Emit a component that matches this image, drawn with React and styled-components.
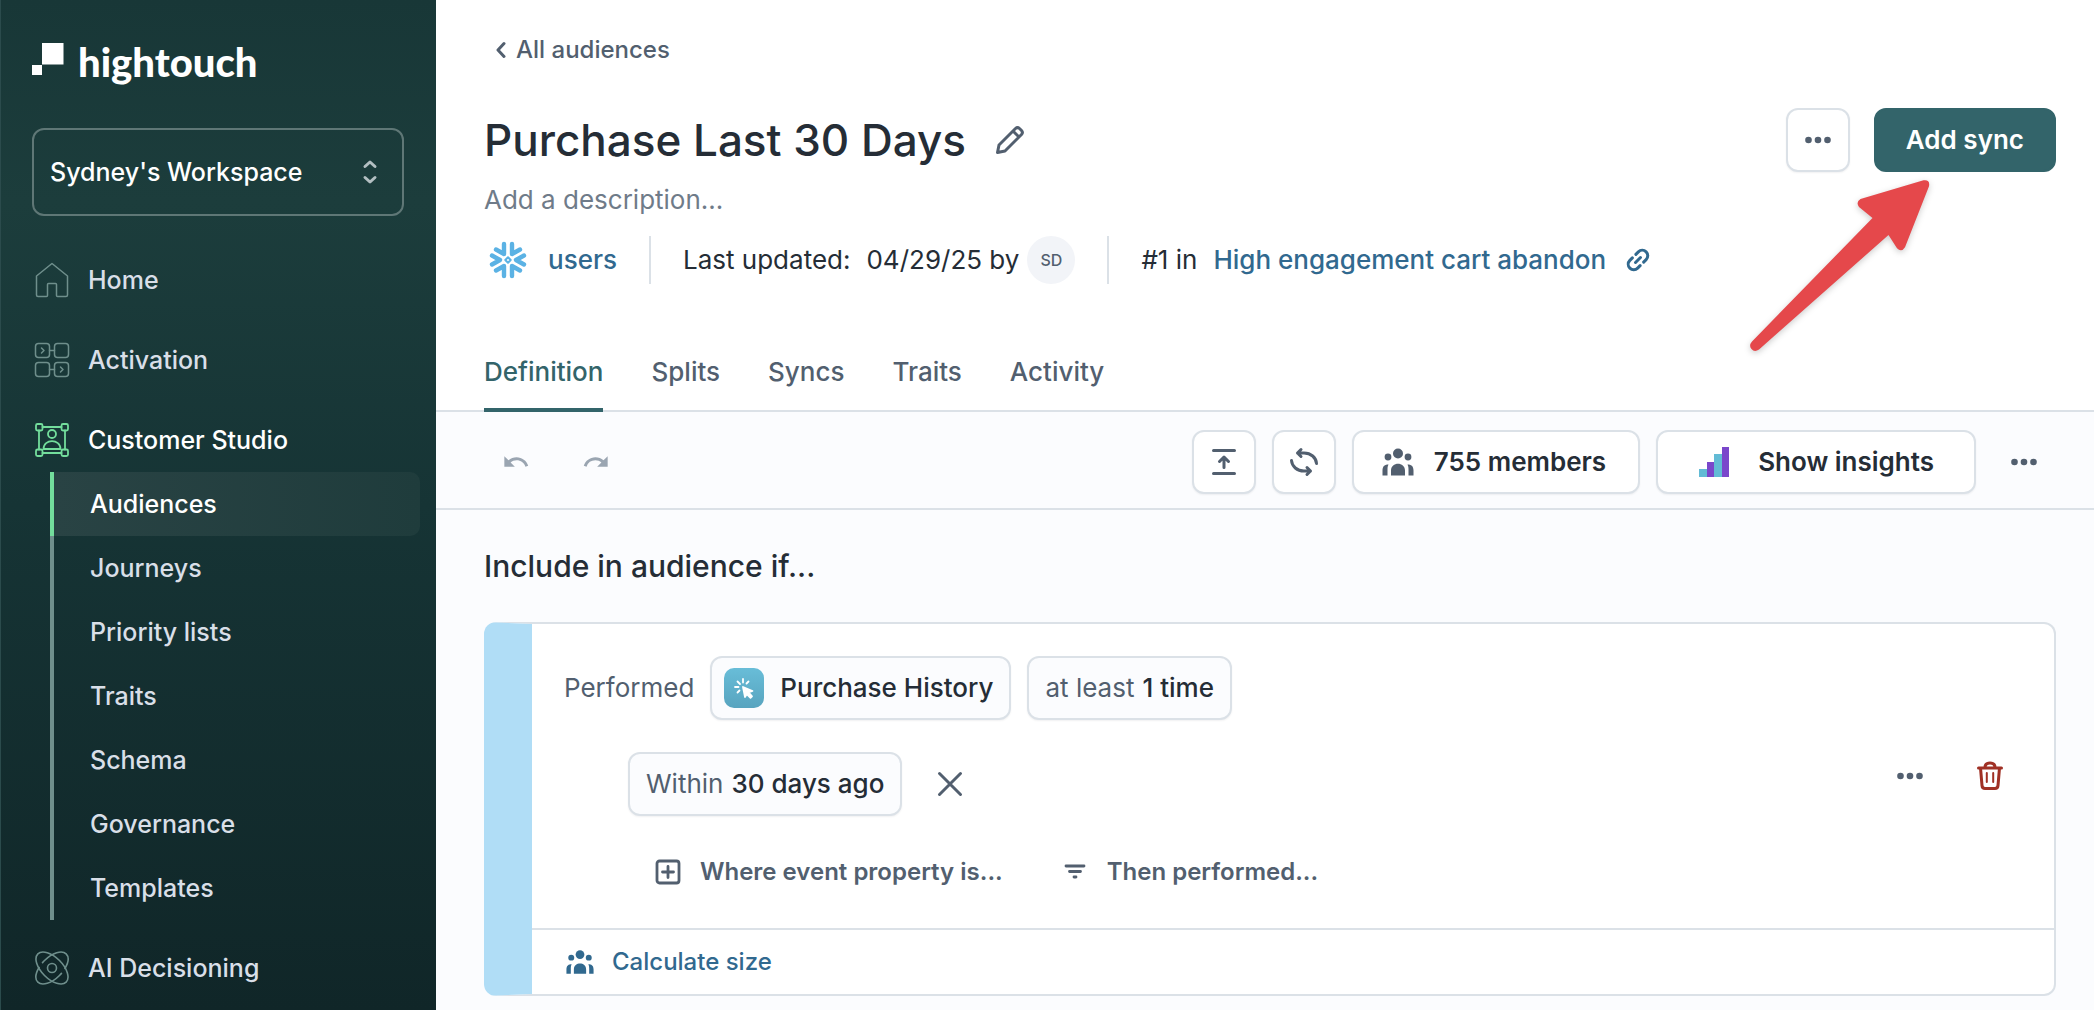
import React from "react";
import styled, { createGlobalStyle } from "styled-components";
import { MdUndo, MdRedo } from "react-icons/md";

const SLATE = "#525f6f";
const INK = "#252d36";
const GRAY = "#6f7b89";
const LINE = "#dbe1e7";
const TEAL = "#33646a";
const BLUE = "#31698f";
const SURFACE = "#fbfcfe";
const GREEN = "#73dd9c";
const MUTED = "#6f8f8c";

const GlobalStyle = createGlobalStyle`
  * {
    box-sizing: border-box;
  }

  body {
    margin: 0;
    background: ${SURFACE};
    color: ${INK};
    font-family: Inter, "Liberation Sans", sans-serif;
    font-size: 26px;
    line-height: 32px;
  }

  button {
    font: inherit;
    color: inherit;
    padding: 0;
    border: none;
    background: none;
    cursor: pointer;
  }

  a {
    text-decoration: none;
  }

  svg {
    display: block;
    flex: none;
  }
`;

const Page = styled.div`
  display: flex;
  height: 100vh;
  overflow: hidden;
`;

const Sidebar = styled.aside`
  flex: none;
  display: flex;
  flex-direction: column;
  gap: 32px;
  width: 436px;
  padding: 40px 0 0;
  border-left: 1px solid #2b4b4c;
  background: linear-gradient(#183737, #1c3d3c 20%, #163435 50%, #102628);
  font-size: 25px;
  font-weight: 500;

  > * {
    flex-shrink: 0;
  }
`;

const Logo = styled.a`
  display: flex;
  gap: 14px;
  height: 56px;
  padding-left: 31px;
  color: #fff;
  font-family: Lato, sans-serif;
  font-weight: 900;
  font-size: 40px;
  line-height: 44px;

  svg {
    margin-top: 3px;
  }
`;

const Workspace = styled.button`
  display: flex;
  align-items: center;
  justify-content: space-between;
  height: 88px;
  margin: 0 32px 0 31px;
  padding: 0 18px 0 16px;
  border: 2px solid #5f7776;
  border-radius: 12px;
  color: #fff;

  svg {
    color: #b3bfc2;
  }
`;

const Nav = styled.nav`
  display: flex;
  flex-direction: column;
`;

const NavLink = styled.a`
  display: flex;
  align-items: center;
  gap: 18px;
  height: 64px;
  margin-bottom: ${({ $active }) => ($active ? 0 : 16)}px;
  padding-left: 33px;
  color: ${({ $active }) => ($active ? "#fff" : "#d9dfe8")};

  svg {
    color: ${({ $active }) => ($active ? GREEN : MUTED)};
  }
`;

const SubNav = styled.div`
  display: flex;
  flex-direction: column;
  margin: 0 16px 16px 49px;
`;

const SubLink = styled.a`
  display: flex;
  align-items: center;
  height: 64px;
  padding-left: 36px;
  border-left: 4px solid ${({ $active }) => ($active ? GREEN : MUTED)};
  border-radius: ${({ $active }) => ($active ? "0 10px 10px 0" : "0")};
  background: ${({ $active }) =>
    $active ? "linear-gradient(90deg, #294344, #1f3c3c)" : "none"};
  color: ${({ $active }) => ($active ? "#fff" : "#d9dfe8")};
`;

const Main = styled.main`
  position: relative;
  flex: 1;
  min-width: 0;
`;

const Header = styled.header`
  padding: 34px 38px 0 48px;
  border-bottom: 2px solid ${LINE};
  background: #fff;
`;

const BackLink = styled.a`
  display: inline-flex;
  align-items: center;
  gap: 10px;
  padding-left: 12px;
  color: ${SLATE};
  font-size: 24px;
  font-weight: 500;
`;

const TitleRow = styled.div`
  display: flex;
  align-items: center;
  gap: 24px;
  height: 64px;
  margin-top: 42px;
`;

const Title = styled.h1`
  margin: 0 4px 0 0;
  font-size: 44px;
  font-weight: 500;
  line-height: 56px;
`;

const Spacer = styled.div`
  flex: 1;
`;

const Button = styled.button`
  display: flex;
  align-items: center;
  justify-content: center;
  height: 64px;
  min-width: 64px;
  padding: ${({ $pad }) => $pad || "0"};
  gap: ${({ $gap }) => $gap || 0}px;
  border: 2px solid ${LINE};
  border-radius: 12px;
  background: #fff;
  color: ${INK};
  font-weight: 600;
  box-shadow: 0 1px 2px rgba(16, 24, 40, 0.06);

  svg {
    color: ${SLATE};
  }
`;

const PrimaryButton = styled(Button)`
  padding: 0 30px;
  border-color: ${TEAL};
  background: ${TEAL};
  color: #fff;
  box-shadow: none;
`;

const IconButton = styled.button`
  display: flex;
  align-items: center;
  justify-content: center;
  width: ${({ $size }) => $size || 32}px;
  height: 48px;
  color: ${({ $color }) => $color || SLATE};
`;

const Description = styled.p`
  margin: 12px 0 20px;
  color: ${GRAY};
`;

const Meta = styled.div`
  display: flex;
  align-items: center;
  height: 48px;
`;

const MetaGroup = styled.div`
  display: flex;
  align-items: center;
  gap: 16px;
  height: 48px;
  padding: 0 32px;
  border-left: 2px solid ${LINE};

  &:first-child {
    gap: 21px;
    padding-left: 5px;
    border-left: none;
  }
`;

const MetaLink = styled.a`
  color: ${BLUE};
  font-weight: 500;
`;

const Avatar = styled.span`
  width: 48px;
  height: 48px;
  margin-left: -8px;
  border-radius: 50%;
  background: #f2f4f8;
  color: ${SLATE};
  font-size: 16px;
  font-weight: 500;
  line-height: 48px;
  text-align: center;
`;

const Tabs = styled.div`
  display: flex;
  gap: 48px;
  margin: 56px 0 -2px;
`;

const Tab = styled.button`
  height: 72px;
  padding-bottom: 4px;
  border-bottom: 4px solid ${({ $active }) => ($active ? TEAL : "transparent")};
  color: ${({ $active }) => ($active ? TEAL : SLATE)};
  font-weight: 500;
`;

const Toolbar = styled.div`
  display: flex;
  align-items: center;
  gap: 16px;
  padding: 18px 38px 14px 48px;
  border-bottom: 2px solid ${LINE};
`;

const History = styled.div`
  display: flex;
  gap: 16px;

  button {
    color: #9aa5b1;
  }
`;

const Content = styled.section`
  padding: 36px 38px 0 48px;
`;

const Heading = styled.h2`
  margin: 0 0 36px;
  font-size: 30px;
  font-weight: 500;
  line-height: 40px;
`;

const Card = styled.div`
  border: 2px solid ${LINE};
  border-left: 48px solid #b0ddf6;
  border-radius: 12px;
  background: #fff;
`;

const CardBody = styled.div`
  display: flex;
  align-items: center;
  justify-content: space-between;
  padding: 32px 48px 32px 32px;
`;

const Conditions = styled.div`
  display: flex;
  flex-direction: column;
  gap: 32px;
`;

const ConditionRow = styled.div`
  display: flex;
  align-items: center;
  gap: ${({ $gap }) => $gap || 16}px;
  padding-left: ${({ $indent }) => $indent || 0}px;
  color: ${SLATE};
`;

const Pill = styled.button`
  display: flex;
  align-items: center;
  gap: ${({ $gap }) => $gap || 8}px;
  height: 64px;
  padding: 0 16px;
  padding-left: ${({ $gap }) => ($gap ? 12 : 16)}px;
  border: 2px solid ${LINE};
  border-radius: 12px;
  background: ${SURFACE};
  color: ${SLATE};
  box-shadow: 0 1px 2px rgba(16, 24, 40, 0.06);

  strong {
    color: ${INK};
    font-weight: 500;
  }
`;

const EventBadge = styled.span`
  display: flex;
  align-items: center;
  justify-content: center;
  width: 40px;
  height: 40px;
  border-radius: 10px;
  background: linear-gradient(#68bdd8, #58a4bf);
  color: #fff;
`;

const TextButton = styled.button`
  display: flex;
  align-items: center;
  gap: 18px;
  height: 48px;
  color: ${({ $color }) => $color || SLATE};
  font-size: 24px;
  font-weight: ${({ $weight }) => $weight || 600};
`;

const CardActions = styled.div`
  display: flex;
  gap: 48px;
`;

const CardFooter = styled.div`
  padding: 8px 34px;
  border-top: 2px solid ${LINE};
`;

const Pointer = styled.svg`
  position: absolute;
  top: 170px;
  right: 150px;
  pointer-events: none;
  filter: drop-shadow(0 2px 3px rgba(0, 0, 0, 0.2));
`;

const Stroke = ({ size = 36, width = 2, color = "currentColor", children }) => (
  <svg
    width={size}
    height={size}
    viewBox={`0 0 ${size} ${size}`}
    fill="none"
    stroke={color}
    strokeWidth={width}
    strokeLinecap="round"
    strokeLinejoin="round"
    aria-hidden="true"
  >
    {children}
  </svg>
);

const HomeIcon = () => (
  <Stroke width={1.5}>
    <path d="M18 1.5 2.5 14v19q0 1.5 1.5 1.5h8.500q1 0 1-1V22.500q0-1 1-1h7q1 0 1 1v11q0 1 1 1H32q1.5 0 1.500-1.500V14z" />
  </Stroke>
);

const ActivationIcon = () => (
  <Stroke width={1.5}>
    <rect x="1.5" y="1.5" width="14" height="14" rx="3" />
    <rect x="20.5" y="1.5" width="14" height="14" rx="3" />
    <rect x="1.5" y="20.5" width="14" height="14" rx="3" />
    <rect x="20.5" y="20.5" width="14" height="14" rx="3" />
    <path d="M15.5 8.5h5M15.5 27.5h5M7.5 6l2.500 2.500L7.500 11M26.500 25l2.500 2.500-2.500 2.500" />
  </Stroke>
);

const StudioIcon = () => (
  <Stroke width={1.8}>
    <rect x="2" y="2" width="6.5" height="6.5" rx="1.5" />
    <rect x="27.5" y="2" width="6.5" height="6.5" rx="1.5" />
    <rect x="2" y="27.5" width="6.5" height="6.5" rx="1.5" />
    <rect x="27.5" y="27.5" width="6.5" height="6.5" rx="1.5" />
    <path d="M8.5 5h19M8.5 31h19M5 8.5v19M31 8.5v19" />
    <circle cx="18" cy="12" r="4" />
    <path d="M9.5 27c0-10.500 17-10.500 17 0z" />
  </Stroke>
);

const DecisioningIcon = () => (
  <Stroke width={1.6}>
    <circle cx="18" cy="18" r="4.5" />
    <ellipse cx="18" cy="18" rx="20" ry="10.6" transform="rotate(45 18 18)" />
    <ellipse
      cx="18"
      cy="18"
      rx="20"
      ry="10.6"
      transform="rotate(-45 18 18)"
      pathLength="100"
      strokeDasharray="16 6 44 6 28 0"
    />
  </Stroke>
);

const SelectorIcon = () => (
  <Stroke size={28} width={3}>
    <path d="m9 8.500 5-4.500 5 4.500M9 19.500l5 4.500 5-4.500" />
  </Stroke>
);

const SnowflakeIcon = () => (
  <Stroke size={38} width={4.4} color="#5bb2e4">
    <path d="M15 3v10L7 8.500M23 3v10l8-4.500M15 35V25l-8 4.500M23 35V25l8 4.500M3 14.500l8 4.500-8 4.500M35 14.500 27 19l8 4.500" />
    <path strokeWidth="2" d="m19 16.300 2.700 2.700-2.700 2.700-2.700-2.700z" />
  </Stroke>
);

const DotsIcon = () => (
  <svg width="28" height="28" viewBox="0 0 28 28" fill="currentColor" aria-hidden="true">
    <circle cx="4.5" cy="14" r="3.3" />
    <circle cx="14" cy="14" r="3.3" />
    <circle cx="23.5" cy="14" r="3.3" />
  </svg>
);

const PeopleIcon = ({ size = 32 }) => (
  <svg width={size} height={size} viewBox="0 0 32 32" fill="currentColor" aria-hidden="true">
    <circle cx="16" cy="7.5" r="5" />
    <circle cx="6" cy="11" r="3.4" />
    <circle cx="26" cy="11" r="3.4" />
    <path d="M9 29.500v-5c0-9 14-9 14 0v5zM.5 29.500v-5c0-4.500 2.500-6 6-6-.8 1.500-1 3-1 5v6zM31.500 29.500v-5c0-4.500-2.500-6-6-6 .8 1.500 1 3 1 5v6z" />
  </svg>
);

const navTop = [
  { label: "Home", Icon: HomeIcon },
  { label: "Activation", Icon: ActivationIcon },
  { label: "Customer Studio", Icon: StudioIcon, active: true },
];

const studioLinks = [
  "Audiences",
  "Journeys",
  "Priority lists",
  "Traits",
  "Schema",
  "Governance",
  "Templates",
];

const tabs = ["Definition", "Splits", "Syncs", "Traits", "Activity"];

const App = () => (
  <Page>
    <GlobalStyle />
    <Sidebar>
      <Logo href="#">
        <svg width="32" height="32" viewBox="0 0 32 32" fill="currentColor" aria-hidden="true">
          <path d="M10 0h21.500v21.500H10zM0 22h10v10H0z" />
        </svg>
        hightouch
      </Logo>
      <Workspace aria-haspopup="listbox">
        Sydney's Workspace
        <SelectorIcon />
      </Workspace>
      <Nav>
        {navTop.map(({ label, Icon, active }) => (
          <NavLink href="#" key={label} $active={active}>
            <Icon />
            {label}
          </NavLink>
        ))}
        <SubNav>
          {studioLinks.map((label, i) => (
            <SubLink href="#" key={label} $active={i === 0}>
              {label}
            </SubLink>
          ))}
        </SubNav>
        <NavLink href="#">
          <DecisioningIcon />
          AI Decisioning
        </NavLink>
      </Nav>
    </Sidebar>

    <Main>
      <Header>
        <BackLink href="#">
          <svg
            width="10"
            height="18"
            viewBox="0 0 10 18"
            fill="none"
            stroke="currentColor"
            strokeWidth="3"
            strokeLinecap="round"
            strokeLinejoin="round"
            aria-hidden="true"
          >
            <path d="M8 2.500 2 9l6 6.500" />
          </svg>
          All audiences
        </BackLink>
        <TitleRow>
          <Title>Purchase Last 30 Days</Title>
          <IconButton aria-label="Edit name">
            <Stroke size={32} width={3}>
              <path d="M3.500 28.500 5 21 21.500 4.500q2-1.800 4 0l2 2q1.800 2 0 4L11 27zM19 7l6 6" />
            </Stroke>
          </IconButton>
          <Spacer />
          <Button aria-label="More actions">
            <DotsIcon />
          </Button>
          <PrimaryButton>Add sync</PrimaryButton>
        </TitleRow>
        <Description>Add a description...</Description>
        <Meta>
          <MetaGroup>
            <SnowflakeIcon />
            <MetaLink href="#">users</MetaLink>
          </MetaGroup>
          <MetaGroup>
            <span>Last updated:</span>
            <span>04/29/25 by</span>
            <Avatar>SD</Avatar>
          </MetaGroup>
          <MetaGroup>
            <span>#1 in</span>
            <MetaLink href="#">High engagement cart abandon</MetaLink>
            <IconButton aria-label="Copy link" $color={BLUE}>
              <Stroke size={28} width={3}>
                <g transform="rotate(-45 14 14)">
                  <path d="M11.500 8.500H8a5.500 5.500 0 0 0 0 11h3.500M16.500 8.500H20a5.500 5.500 0 0 1 0 11h-3.500M10.500 14h7" />
                </g>
              </Stroke>
            </IconButton>
          </MetaGroup>
        </Meta>
        <Tabs role="tablist">
          {tabs.map((label, i) => (
            <Tab key={label} role="tab" aria-selected={i === 0} $active={i === 0}>
              {label}
            </Tab>
          ))}
        </Tabs>
      </Header>

      <Toolbar>
        <History>
          <IconButton $size={64} aria-label="Undo">
            <MdUndo size={28} />
          </IconButton>
          <IconButton $size={64} aria-label="Redo">
            <MdRedo size={28} />
          </IconButton>
        </History>
        <Spacer />
        <Button aria-label="Load definition">
          <Stroke size={32} width={3}>
            <path d="M5.500 4.500h21M5.500 27.500h21M16 21.500V11.500M11.500 15.500l4.500-4.500 4.500 4.500" />
          </Stroke>
        </Button>
        <Button aria-label="Refresh">
          <Stroke size={32} width={3}>
            <path d="M9.500 7H16c7 0 12 4.500 12.500 10.500M13 3.500 9.500 7l3.500 3.500M22.500 25H16C9 25 4 20.500 3.500 14.500M19 28.500l3.500-3.500-3.500-3.500" />
          </Stroke>
        </Button>
        <Button $pad="0 32px 0 28px" $gap={20}>
          <PeopleIcon />
          755 members
        </Button>
        <Button $pad="0 40px" $gap={28}>
          <svg width="32" height="32" viewBox="0 0 32 32" aria-hidden="true">
            <path fill="#62bbd5" d="M1 23h8v8H1zM16 8h8v23h-8z" />
            <path fill="#7a47cb" d="M9 16h7v15H9zM24 1h7v30h-7z" />
          </svg>
          Show insights
        </Button>
        <IconButton $size={64} aria-label="More options">
          <DotsIcon />
        </IconButton>
      </Toolbar>

      <Content>
        <Heading>Include in audience if...</Heading>
        <Card>
          <CardBody>
            <Conditions>
              <ConditionRow>
                Performed
                <Pill $gap={16}>
                  <EventBadge>
                    <Stroke size={24} width={1.8}>
                      <path fill="currentColor" d="m11 11 9.500 4-4 1.300 3.500 4-1.500 1.500-3.700-3.700L13 21z" />
                      <path d="M11 3v3.500M3 11h3.500M5.500 5.500 8 8M16.500 5.500l-2 2M5.500 16.500l2-2" />
                    </Stroke>
                  </EventBadge>
                  <strong>Purchase History</strong>
                </Pill>
                <Pill>
                  at least <strong>1 time</strong>
                </Pill>
              </ConditionRow>
              <ConditionRow $gap={32} $indent={64}>
                <Pill>
                  Within <strong>30 days ago</strong>
                </Pill>
                <IconButton aria-label="Remove window">
                  <Stroke size={28} width={3}>
                    <path d="m3.500 3.500 21 21M24.500 3.500l-21 21" />
                  </Stroke>
                </IconButton>
              </ConditionRow>
              <ConditionRow $gap={58} $indent={90}>
                <TextButton>
                  <Stroke size={28} width={2.8}>
                    <rect x="3" y="3" width="22" height="22" rx="2.5" />
                    <path d="M14 8.500v11M8.500 14h11" />
                  </Stroke>
                  Where event property is...
                </TextButton>
                <TextButton>
                  <Stroke size={28} width={2.8}>
                    <path d="M5 8h18M8.500 13.500h11M13 19h2" />
                  </Stroke>
                  Then performed...
                </TextButton>
              </ConditionRow>
            </Conditions>
            <CardActions>
              <IconButton aria-label="Condition options">
                <DotsIcon />
              </IconButton>
              <IconButton aria-label="Delete condition" $color="#a03125">
                <Stroke size={32} width={3}>
                  <path d="M4.500 8h23M6.500 8 8 25.500q.3 3 3 3h10q2.700 0 3-3L25.500 8M11 7.500q0-4.500 5-4.500t5 4.500" />
                  <path strokeWidth="2" d="M12.800 13v9M19.200 13v9" />
                </Stroke>
              </IconButton>
            </CardActions>
          </CardBody>
          <CardFooter>
            <TextButton $color={BLUE} $weight={500}>
              <PeopleIcon size={28} />
              Calculate size
            </TextButton>
          </CardFooter>
        </Card>
      </Content>

      <Pointer width="200" height="190" viewBox="0 0 200 190" aria-hidden="true">
        <path
          fill="#e5484b"
          d="M179.500 10.300q6.800-1 5.500 6l-24 61q-3.500 5.500-8 1L144.500 65 15 179.500q-4.500 3-7.500-.5-3-3.500.5-7.500L128.500 48 115 37q-3.500-5 1.500-8z"
        />
      </Pointer>
    </Main>
  </Page>
);

export default App;
